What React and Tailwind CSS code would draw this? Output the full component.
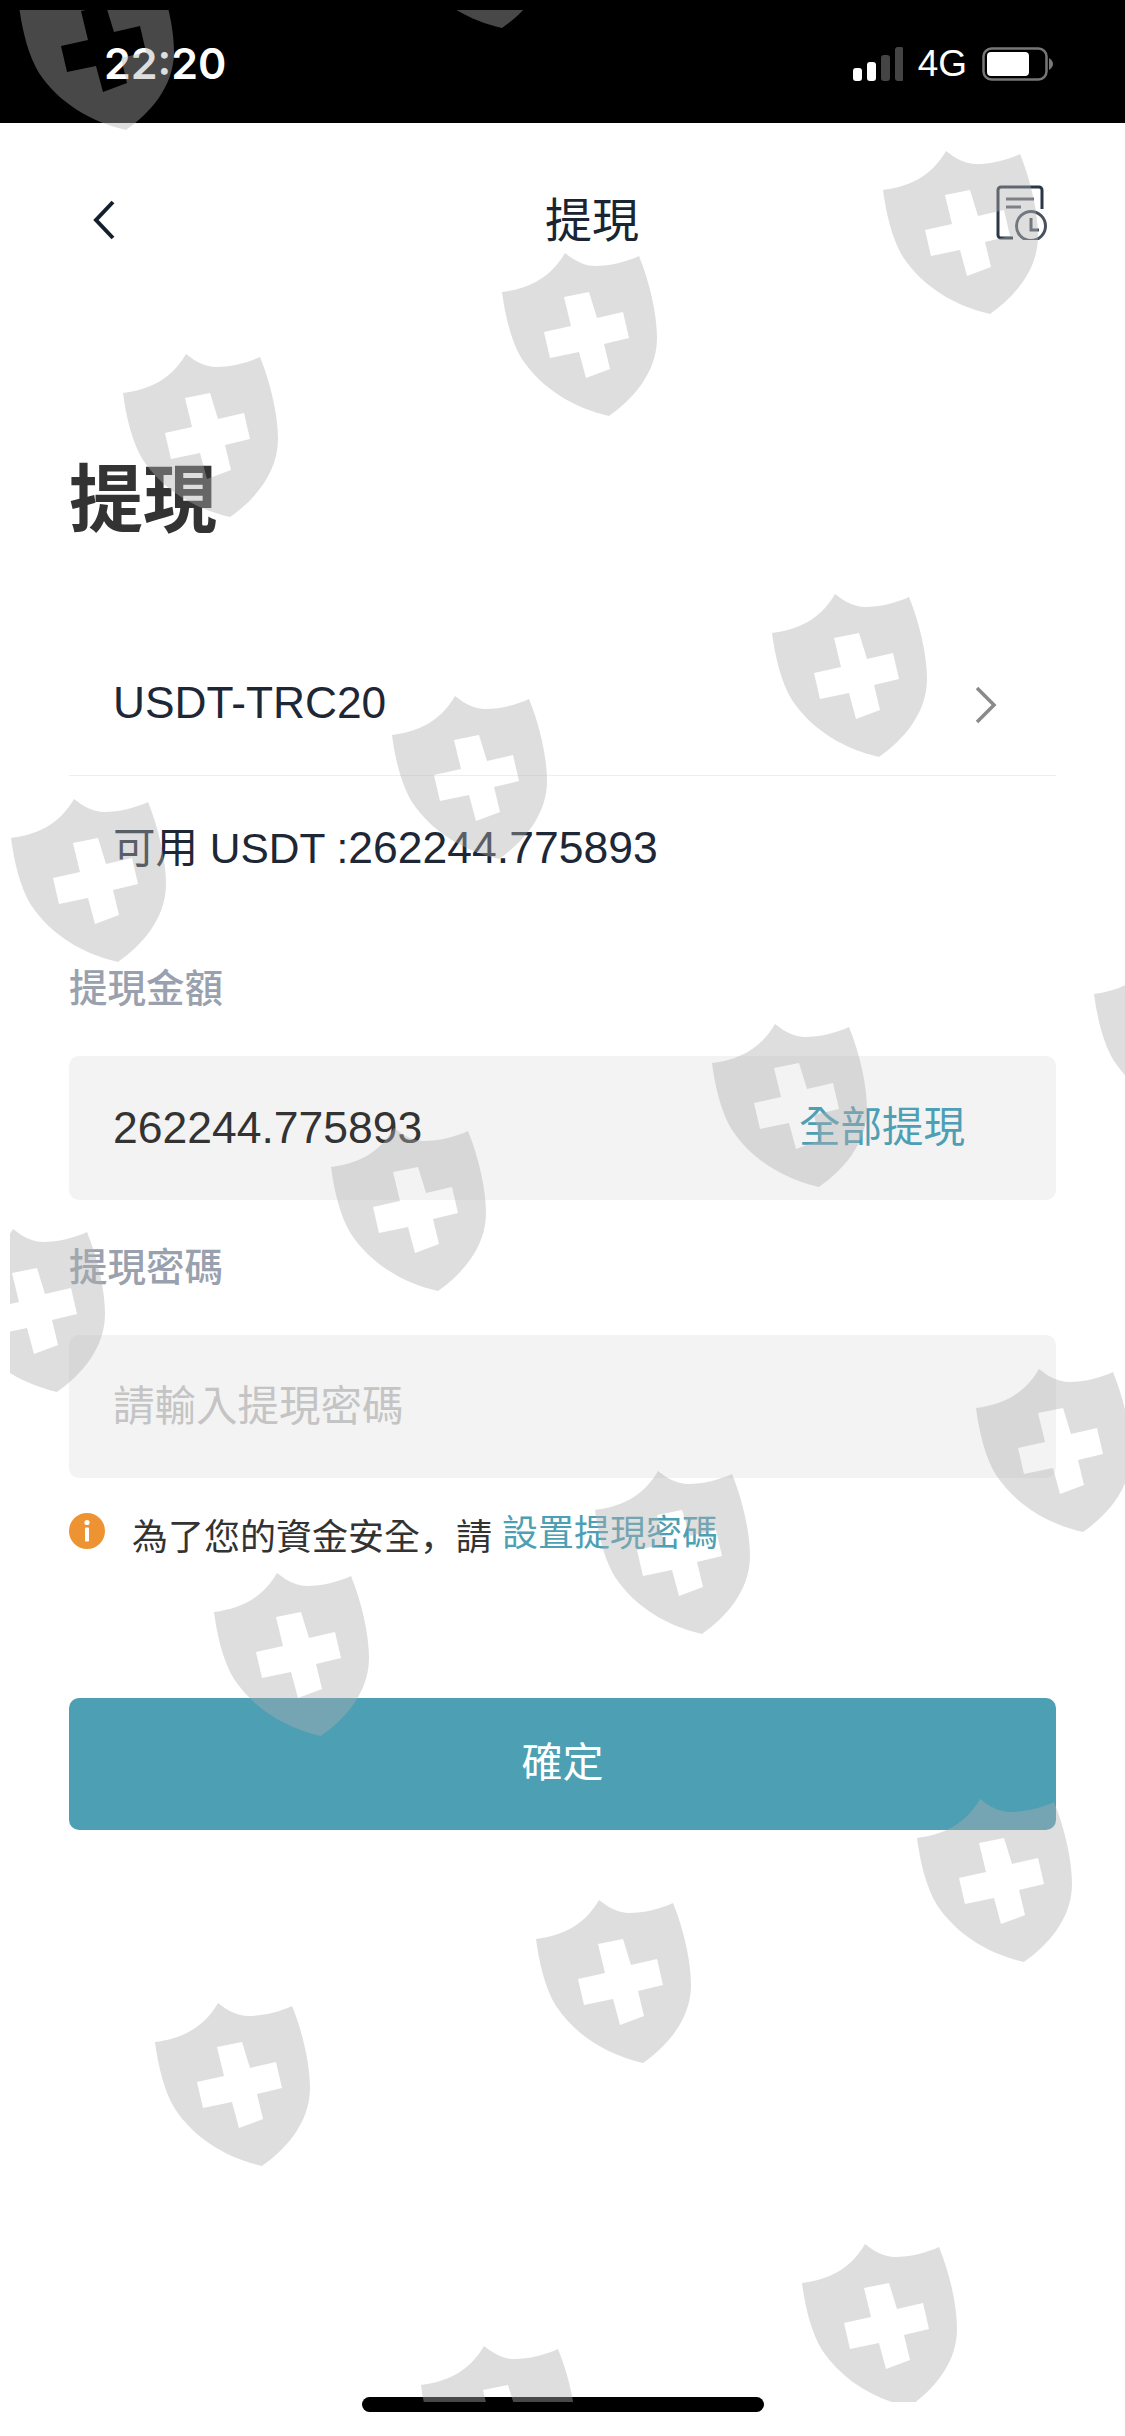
const latin = "font-['Liberation_Sans','Noto_Sans_CJK_TC',sans-serif]"

// watermark shields, top-left corner of each one in page pixels
const shields = [
  [19, -33], [395, -135], [883, 151], [502, 253], [123, 354], [772, 594], [392, 696],
  [11, 799], [1094, 955], [712, 1024], [331, 1128], [-50, 1229], [976, 1369], [595, 1471],
  [214, 1573], [917, 1799], [536, 1900], [155, 2003], [802, 2244], [421, 2346],
]

function Watermark() {
  return (
    <svg className="absolute left-[10px] top-[10px] w-[1115px] h-[2392px] pointer-events-none" viewBox="10 10 1115 2392">
      {shields.map(([x, y]) => (
        <path
          key={`${x}-${y}`}
          transform={`translate(${x} ${y})`}
          fill="#aeaeae"
          fillOpacity="0.41"
          fillRule="evenodd"
          d="M63 0C73 8 83 13 93 13C108 13 124 9 137 3C148 30 155 62 155 85C155 120 130 147 107 163C72 155 40 136 20 106C9 88 3 62 0 39C25 36 48 26 63 0ZM62 44L69 73L42 79L48 105L77 99L84 125L108 116L102 91L127 85L121 59L95 65L87 39Z"
        />
      ))}
    </svg>
  )
}

function StatusBar() {
  return (
    <div className="h-[123px] bg-black flex items-center pl-[104px] pr-[71px] pt-[4px] text-white">
      <span className="font-['Inter',sans-serif] font-semibold text-[43px] leading-none">22:20</span>
      <svg className="ml-auto w-[50px] h-[34px]" viewBox="0 0 50 34">
        <rect x="0" y="21" width="9" height="13" rx="3" fill="#fff" />
        <rect x="14" y="15" width="9" height="19" rx="3" fill="#fff" />
        <rect x="28" y="8" width="9" height="26" rx="3" fill="#444" />
        <rect x="42" y="0" width="9" height="34" rx="3" fill="#444" />
      </svg>
      <span className={`${latin} ml-[15px] text-[37px] leading-none`}>4G</span>
      <svg className="ml-[15px] w-[72px] h-[34px]" viewBox="0 0 72 34">
        <rect x="1.5" y="1.5" width="63" height="31" rx="8" fill="none" stroke="#777" strokeWidth="2.5" />
        <rect x="5" y="5" width="42" height="24" rx="4" fill="#fff" />
        <path d="M67 11C70 13 71 15 71 17C71 19 70 21 67 23Z" fill="#777" />
      </svg>
    </div>
  )
}

function RecordIcon() {
  return (
    <svg className="w-[52px] h-[55px] -mt-[14px]" viewBox="0 0 52 55" fill="none">
      <path d="M46 24V5a3 3 0 0 0-3-3H5a3 3 0 0 0-3 3v45a3 3 0 0 0 3 3h12" stroke="#2b3646" strokeWidth="3" />
      <path d="M10 14h28" stroke="#5a5f68" strokeWidth="3" />
      <path d="M10 22h15" stroke="#5a5f68" strokeWidth="3" />
      <circle cx="35" cy="41" r="14.5" stroke="#48525f" strokeWidth="3" />
      <path d="M35 33v12h8" stroke="#48525f" strokeWidth="3" />
    </svg>
  )
}

export default function App() {
  return (
    <div className={`relative w-[1125px] h-[2436px] bg-white overflow-hidden ${latin}`}>
      <StatusBar />

      <nav className="h-[193px] flex items-center pl-[93px] pr-[77px]">
        <svg className="w-[22px] h-[40px]" viewBox="0 0 22 40" fill="none">
          <path d="M20 2L3 20L20 38" stroke="#14202e" strokeWidth="4" />
        </svg>
        <h1 className="ml-[430px] mt-[2px] text-[47px] leading-none text-[#1a2432]">提現</h1>
        <div className="ml-auto">
          <RecordIcon />
        </div>
      </nav>

      <div className="px-[69px]">
        <h2 className="text-[74px] leading-none font-bold text-[#333] mt-[148px]">提現</h2>

        <div className="mt-[143px] h-[95px] pb-[26px] pl-[44px] pr-[59px] border-b border-[#eeeeee] flex items-start justify-between text-[44.3px] leading-none text-[#1d2736]">
          <span>USDT-TRC20</span>
          <svg className="w-[22px] h-[38px] mt-[5px]" viewBox="0 0 22 38" fill="none">
            <path d="M2 2L19 19L2 36" stroke="#8a8a8a" strokeWidth="3.5" />
          </svg>
        </div>

        <div className="mt-[50px] pl-[44px] text-[44.5px] leading-none text-[#1d2736]">
          <span className="text-[42.5px]">可用 USDT :</span>262244.775893
        </div>

        <label className="block mt-[99px] text-[38.5px] leading-none font-medium text-[#9aa1ae]">提現金額</label>
        <div className="mt-[48px] h-[144px] rounded-[10px] bg-[#f3f3f3] pl-[44px] pr-[91px] flex items-center justify-between">
          <span className="text-[44.5px] leading-none text-[#333]">262244.775893</span>
          <span className="text-[41.5px] leading-none text-[#4d9fb4]">全部提現</span>
        </div>

        <label className="block mt-[49px] text-[38.5px] leading-none font-medium text-[#9aa1ae]">提現密碼</label>
        <div className="mt-[47px] h-[143px] rounded-[10px] bg-[#f3f3f3] pl-[44px] pt-[2px] flex items-center text-[41.5px] leading-none text-[#c4c4c4]">
          請輸入提現密碼
        </div>

        <div className="mt-[35px] flex items-start text-[36px] leading-none text-[#333]">
          <svg className="w-[36px] h-[36px]" viewBox="0 0 36 36">
            <circle cx="18" cy="18" r="18" fill="#ee9332" />
            <circle cx="18" cy="9.5" r="2.6" fill="#fff" />
            <rect x="16" y="14.5" width="4" height="14" rx="1" fill="#fff" />
          </svg>
          <span className="ml-[27px] mt-[3px]">
            為了您的資金安全<span className="font-['Noto_Sans_CJK_SC',sans-serif]">，</span>請
          </span>
          <span className="ml-[10px] mt-[3px] text-[#4d9fb4]">設置提現密碼</span>
        </div>

        <button className="mt-[142px] w-full h-[132px] rounded-[10px] bg-[#4d9fb4] text-white text-[41px] leading-none">確定</button>
      </div>

      <div className="absolute left-[362px] top-[2397px] w-[402px] h-[15px] rounded-full bg-black" />
      <Watermark />
    </div>
  )
}
